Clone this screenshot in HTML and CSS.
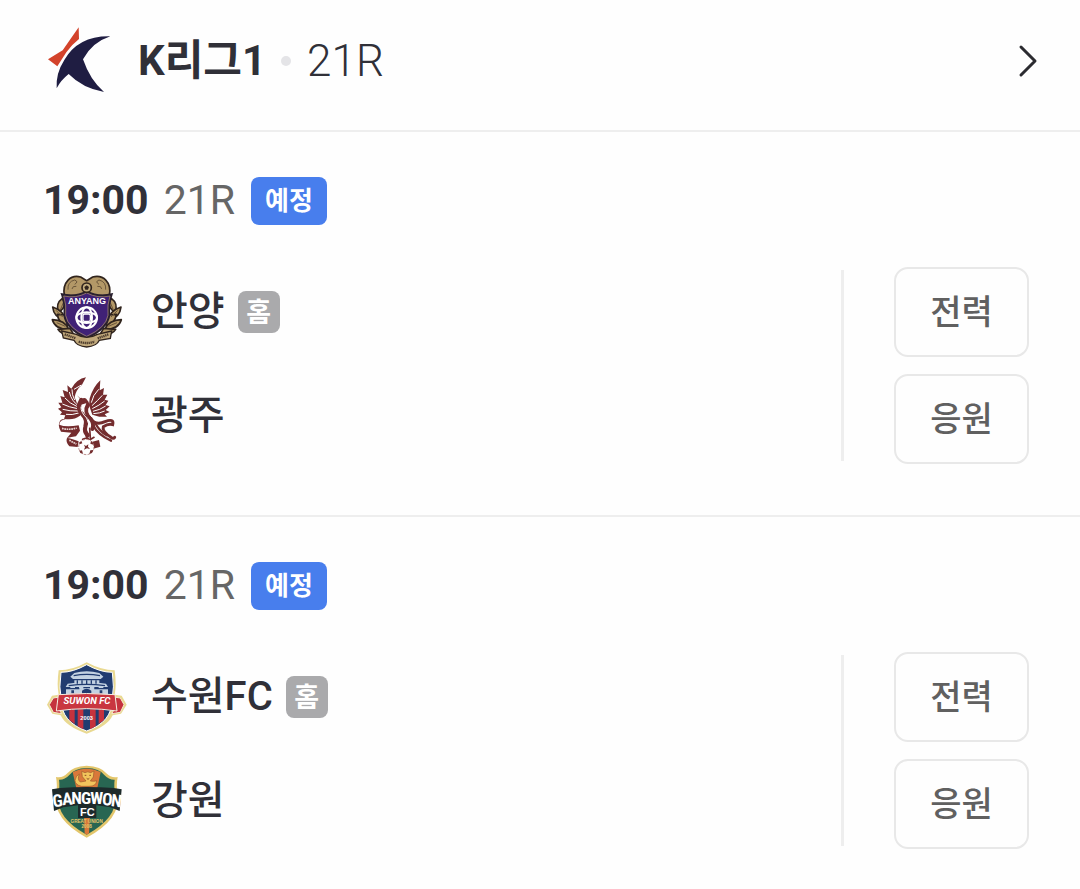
FILE: index.html
```html
<!DOCTYPE html>
<html lang="ko">
<head>
    <meta charset="UTF-8">
    <meta name="viewport" content="width=device-width, initial-scale=1.0">
    <title>K리그1 21R</title>
    <link rel="stylesheet" href="styles.css">
</head>
<body>
    <header>
        <a class="league" href="#">
            <svg class="league-logo" viewBox="45 33 210 210" aria-hidden="true">
                <path fill="#d3432b" d="M146 37L147 72Q124 90 109 112L82 154L54 133L98 106Z"/>
                <path fill="#1f1d42" d="M241 64Q186 82 159 133Q180 195 222 231Q157 219 116 177Q92 196 80 220Q77 175 103 135Q145 62 241 64Z"/>
            </svg>
            <h1>K리그1</h1>
            <span class="dot"></span>
            <span class="league-round">21R</span>
            <svg class="chevron" viewBox="0 0 20 34" aria-hidden="true">
                <path d="M3 3L17 17L3 31"/>
            </svg>
        </a>
    </header>

    <main>
        <section class="match">
            <div class="match-head">
                <time datetime="19:00">19:00</time>
                <span class="round">21R</span>
                <span class="status">예정</span>
            </div>
            <div class="match-body">
                <ul class="teams">
                    <li>
                        <svg class="emblem" viewBox="21 21 240 240" aria-hidden="true">
                            <g fill="#b39867" stroke="#30241d" stroke-width="5" stroke-linejoin="round">
                                <path d="M73 92C66 52 92 28 122 36L140 47L158 36C190 28 216 52 208 92Z"/>
                                <path d="M67 100Q45 116 56 143Q72 131 75 116Z"/>
                                <path d="M214 100Q236 116 225 143Q209 131 206 116Z"/>
                                <path d="M38 126Q41 158 76 166Q73 138 38 126Z"/>
                                <path d="M243 126Q240 158 205 166Q208 138 243 126Z"/>
                                <path d="M52 148Q56 176 82 184L78 150Z"/>
                                <path d="M229 148Q225 176 199 184L203 150Z"/>
                                <path d="M37 164Q45 193 86 193Q75 165 37 164Z"/>
                                <path d="M244 164Q236 193 195 193Q206 165 244 164Z"/>
                                <path d="M54 193Q66 213 101 208L90 190Z"/>
                                <path d="M227 193Q215 213 180 208L191 190Z"/>
                            </g>
                            <g fill="none" stroke="#6b563a" stroke-width="3">
                                <path d="M84 74Q82 50 104 45Q117 50 104 58M96 72Q97 62 109 64M197 74Q199 50 177 45Q164 50 177 58M185 72Q184 62 172 64"/>
                                <path d="M48 136L68 156M233 136L213 156M50 173L76 184M231 173L205 184M61 135L70 113M220 135L211 113"/>
                            </g>
                            <path fill="#402176" stroke="#29202e" stroke-width="6" d="M140 79Q106 98 66 88Q76 116 73 151Q79 192 140 219Q201 192 208 151Q205 116 215 88Q175 98 140 79Z"/>
                            <path fill="none" stroke="#b39867" stroke-width="2" d="M140 84Q108 101 71 93Q80 118 77 151Q83 188 140 214Q198 188 204 151Q201 118 210 93Q173 101 140 84Z"/>
                            <circle cx="140" cy="68" r="14" fill="#c3ad7e" stroke="#30241d" stroke-width="5"/>
                            <path fill="#30241d" d="M140 61L147 66L144 74H136L133 66Z"/>
                            <text class="anyang-text" x="141" y="116">ANYANG</text>
                            <g fill="none" stroke="#fff" stroke-width="6">
                                <circle cx="140" cy="158" r="31"/>
                                <ellipse cx="140" cy="158" rx="16" ry="31"/>
                                <ellipse cx="140" cy="158" rx="31" ry="16"/>
                            </g>
                            <rect x="129" y="147" width="22" height="22" rx="5" fill="#402176" stroke="#fff" stroke-width="4"/>
                            <path fill="#c0a87b" stroke="#30241d" stroke-width="4" d="M65 198L109 208Q140 226 172 208L215 198L211 220L178 226Q170 244 140 246Q110 244 102 226L70 219Z"/>
                            <path fill="none" stroke="#4a3a2b" stroke-width="7" stroke-dasharray="4 2" d="M74 208L108 220M116 230Q140 238 164 230M173 220L206 208"/>
                        </svg>
                        <span class="name">안양</span>
                        <span class="home">홈</span>
                    </li>
                    <li>
                        <svg class="emblem" viewBox="21 24 240 240" aria-hidden="true">
                            <g fill="#742c2e">
                                <path d="M138 28Q110 33 94 62L82 52L84 72L68 66L74 88L61 84L67 104L55 104L64 118L54 122L66 133L60 140L76 142L72 152Q100 158 120 143L122 124L111 106L104 88Q107 66 126 50Z"/>
                                <path d="M181 37Q159 57 149 91L147 112L157 140L178 146L201 146L194 139L209 132L197 126L209 115L197 111L205 98L194 95L202 80L189 80L192 60L179 67Z"/>
                            </g>
                            <g fill="none" stroke="#fff" stroke-width="3">
                                <path d="M118 115Q94 100 88 72M112 116Q88 106 75 90M113 122Q88 118 67 108M114 129Q90 130 68 124M116 135Q96 142 78 139M96 64Q95 80 104 96M124 51L102 64"/>
                                <path d="M154 104Q158 82 176 64M156 113Q173 98 187 82M157 122Q178 112 194 99M159 130Q180 126 197 114M160 137Q180 136 194 129"/>
                            </g>
                            <g fill="none" stroke="#742c2e" stroke-linecap="round">
                                <path stroke-width="13" d="M124 96Q108 121 128 140Q143 153 136 178Q132 190 143 202"/>
                                <path stroke-width="12" d="M143 112Q132 130 151 151Q164 168 157 183"/>
                                <path stroke-width="9" d="M156 158Q172 172 195 161Q223 150 218 170Q205 166 190 176Q185 190 213 208Q220 214 224 208"/>
                                <path stroke-width="7" d="M160 173Q174 200 213 218M164 162Q178 190 200 202"/>
                                <path stroke-width="5" d="M136 185L140 213M149 181L151 210M128 214L141 209L149 216L162 208"/>
                            </g>
                            <path fill="#742c2e" d="M111 82L124 94Q136 85 142 97Q151 105 145 119L138 106L123 110L126 100Z"/>
                            <path fill="none" stroke="#fff" stroke-width="3" d="M123 116Q122 133 140 150Q150 166 143 187M148 119Q142 136 157 148"/>
                            <path fill="#742c2e" d="M78 154Q60 155 58 170Q75 178 116 172L120 188L108 205Q94 207 82 210Q92 211 116 220L113 237L88 235Q76 222 81 210L94 194L63 191Q50 170 62 156Q70 151 78 154Z"/>
                            <path fill="none" stroke="#e9d8d5" stroke-width="5" stroke-dasharray="5 2" d="M66 181Q88 187 110 180M88 217L109 228"/>
                            <path fill="#742c2e" d="M157 221L177 216L181 236L157 243Z"/>
                            <circle cx="139" cy="237" r="23" fill="#fff" stroke="#9a5b58" stroke-width="2" stroke-dasharray="8 4"/>
                            <path fill="#742c2e" d="M132 230L138 234L145 229L144 236L150 243L141 241L132 245L135 238ZM119 229L127 226L124 219L117 224ZM153 219L151 227L160 230L158 223ZM118 248L126 247L129 257L121 255ZM151 247L160 246L156 255L148 258Z"/>
                        </svg>
                        <span class="name">광주</span>
                    </li>
                </ul>
                <div class="actions">
                    <button type="button">전력</button>
                    <button type="button">응원</button>
                </div>
            </div>
        </section>

        <section class="match">
            <div class="match-head">
                <time datetime="19:00">19:00</time>
                <span class="round">21R</span>
                <span class="status">예정</span>
            </div>
            <div class="match-body">
                <ul class="teams">
                    <li>
                        <svg class="emblem" viewBox="21 21 240 240" aria-hidden="true">
                            <path fill="#e9d991" d="M140 37Q184 61 224 61Q230 105 224 134L245 137L260 164L243 191L218 196Q203 229 140 251Q77 229 62 196L37 191L21 164L36 137L56 134Q50 105 56 61Q98 61 140 37Z"/>
                            <path fill="#213c70" stroke="#fff" stroke-width="3" d="M140 44Q181 67 217 67Q224 112 216 151Q216 216 140 243Q64 216 64 151Q56 112 63 67Q99 67 140 44Z"/>
                            <path fill="#c5323d" d="M88 178H104V222L88 210ZM113 178H130V238L113 229ZM150 178H167V229L150 238ZM176 178H192V210L176 222Z"/>
                            <g fill="#c3d2e2">
                                <path d="M103 69Q140 59 178 69L190 80L182 87H99L91 80Z"/>
                                <path d="M103 91H178V100H103ZM83 101Q140 91 198 101L204 111H77Z"/>
                                <path d="M78 115H91V108H105V115H117V108H130V115H150V108H163V115H176V108H190V115H204V137H78Z"/>
                            </g>
                            <path fill="none" stroke="#213c70" stroke-width="4" d="M101 77Q140 69 180 77M112 91V101M126 91V101M140 91V101M154 91V101M168 91V101M86 107Q140 99 195 107M78 116H118M163 116H204"/>
                            <path fill="#213c70" d="M126 137V122Q140 111 154 122V137ZM94 121H102V130H94ZM179 121H187V130H179Z"/>
                            <path fill="#c5323d" stroke="#f5e9cd" stroke-width="3" d="M28 164L40 144L59 141L58 180L65 191L40 187ZM252 164L241 144L221 141L222 180L215 191L241 187Z"/>
                            <path fill="#c93640" stroke="#f5eee0" stroke-width="3" d="M55 134Q140 127 225 134L231 183Q140 169 49 183Z"/>
                            <text class="suwon-text" x="141" y="162">SUWON FC</text>
                            <text class="suwon-year" x="140" y="211">2003</text>
                        </svg>
                        <span class="name">수원FC</span>
                        <span class="home">홈</span>
                    </li>
                    <li>
                        <svg class="emblem" viewBox="21 18 240 240" aria-hidden="true">
                            <path fill="#e3c66b" d="M140 32Q184 34 199 55Q214 70 233 66Q228 90 233 120Q243 193 140 248Q38 193 48 120Q53 90 48 66Q68 70 82 55Q98 34 140 32Z"/>
                            <path fill="#286652" d="M140 39Q178 40 193 60Q207 75 224 74Q221 94 226 122Q233 188 140 239Q48 188 55 122Q60 94 57 74Q74 75 88 60Q103 40 140 39Z"/>
                            <path fill="#d9783a" d="M98 51Q140 30 182 51L171 104H110ZM132 183H150L147 235L140 239L134 235Z"/>
                            <path fill="#f2c45c" stroke="#9c5b2c" stroke-width="2" d="M125 49L135 53Q143 48 152 53L162 48L160 66L151 78Q163 80 170 77Q169 94 147 94H125Q105 90 105 76Q108 61 118 57Q111 74 121 81L138 78L127 65Z"/>
                            <path fill="none" stroke="#8d4a26" stroke-width="3" d="M134 61H139M148 61H153M140 70L144 73L148 70"/>
                            <path fill="#1d2a2b" d="M36 103L60 99Q140 93 221 99L245 103L239 168L211 157L169 151V189H114V151L70 157L42 168Z"/>
                            <g class="gangwon-text">
                                <text x="55" y="155" transform="rotate(-7 55 155)">G</text>
                                <text x="83" y="150" transform="rotate(-4 83 150)">A</text>
                                <text x="110" y="147">N</text>
                                <text x="138" y="147">G</text>
                                <text x="170" y="148">W</text>
                                <text x="201" y="151" transform="rotate(4 201 151)">O</text>
                                <text x="227" y="155" transform="rotate(7 227 155)">N</text>
                            </g>
                            <text class="gangwon-fc" x="142" y="184">FC</text>
                            <text class="gangwon-small" x="140" y="204">GREAT UNION</text>
                            <text class="gangwon-small" x="140" y="220">2008</text>
                        </svg>
                        <span class="name">강원</span>
                    </li>
                </ul>
                <div class="actions">
                    <button type="button">전력</button>
                    <button type="button">응원</button>
                </div>
            </div>
        </section>
    </main>
</body>
</html>
```
FILE: styles.css
```css
* {
    box-sizing: border-box;
}
body {
    margin: 0;
    background: #fefefe;
    color: #303038;
    font-family: Roboto, "Noto Sans CJK KR", sans-serif;
}

/* league header */
.league {
    display: flex;
    align-items: center;
    padding: 26px 42px 34px 45px;
    border-bottom: 2px solid #eeeeee;
    color: inherit;
    text-decoration: none;
}
.league-logo {
    width: 70px;
    height: 70px;
    margin-right: 23px;
}
h1 {
    margin: 0;
    font-size: 42px;
    line-height: 60px;
    font-weight: 700;
}
.dot {
    width: 10px;
    height: 10px;
    margin: 0 16px 0 15px;
    border-radius: 50%;
    background: #e4e4e7;
}
.league-round {
    font-size: 44px;
    line-height: 60px;
    font-weight: 300;
}
.chevron {
    width: 20px;
    height: 34px;
    margin-left: auto;
    fill: none;
    stroke: #2b2b30;
    stroke-width: 3;
    stroke-linecap: round;
    stroke-linejoin: round;
}

/* match */
.match {
    padding: 45px 51px 51px 43px;
}
.match + .match {
    border-top: 2px solid #eeeeee;
}
.match-head {
    display: flex;
    height: 48px;
    margin-bottom: 42px;
    font-size: 41px;
    line-height: 46px;
}
.match-head time {
    font-weight: 700;
}
.round {
    margin: 0 16px 0 15px;
    color: #666666;
}
.status {
    padding: 0 14px;
    border-radius: 8px;
    background: #487eed;
    color: #fff;
    font-size: 26px;
    line-height: 48px;
    font-weight: 700;
}
.match-body {
    display: flex;
    justify-content: space-between;
}

/* teams */
.teams {
    display: flex;
    flex-direction: column;
    gap: 24px;
    margin: 0;
    padding: 5px 0 0 4px;
    list-style: none;
}
.teams li {
    display: flex;
    align-items: center;
    height: 80px;
}
.emblem {
    width: 80px;
    height: 80px;
    margin-right: 24px;
}
.name {
    font-size: 40px;
    line-height: 60px;
    font-weight: 500;
}
.home {
    width: 42px;
    height: 42px;
    margin-left: 13px;
    border-radius: 8px;
    background: #aaaaac;
    color: #fff;
    font-size: 27px;
    line-height: 44px;
    font-weight: 700;
    text-align: center;
}

/* buttons */
.actions {
    position: relative;
    display: flex;
    flex-direction: column;
    gap: 17px;
    padding-left: 53px;
}
.actions::before {
    content: "";
    position: absolute;
    top: 3px;
    bottom: 3px;
    left: 0;
    width: 3px;
    background: #eeeeee;
}
button {
    width: 135px;
    height: 90px;
    padding: 0 0 6px;
    border: 2px solid #e8e8e8;
    border-radius: 14px;
    background: transparent;
    color: #606060;
    font-family: inherit;
    font-size: 34px;
    font-weight: 500;
}

/* emblem lettering */
.emblem text {
    font-family: "Liberation Sans", sans-serif;
    font-weight: 700;
    text-anchor: middle;
    fill: #fff;
}
.emblem .anyang-text {
    font-size: 27px;
}
.emblem .suwon-text {
    font-family: Roboto, sans-serif;
    font-size: 29px;
    font-style: italic;
}
.emblem .suwon-year {
    font-size: 17px;
}
.emblem .gangwon-text text {
    font-family: "Roboto Condensed", "Liberation Sans Narrow", "DejaVu Sans Condensed", sans-serif;
    font-size: 52px;
}
.emblem .gangwon-fc {
    font-size: 33px;
}
.emblem .gangwon-small {
    font-size: 14px;
    fill: #e3c66b;
}
```
